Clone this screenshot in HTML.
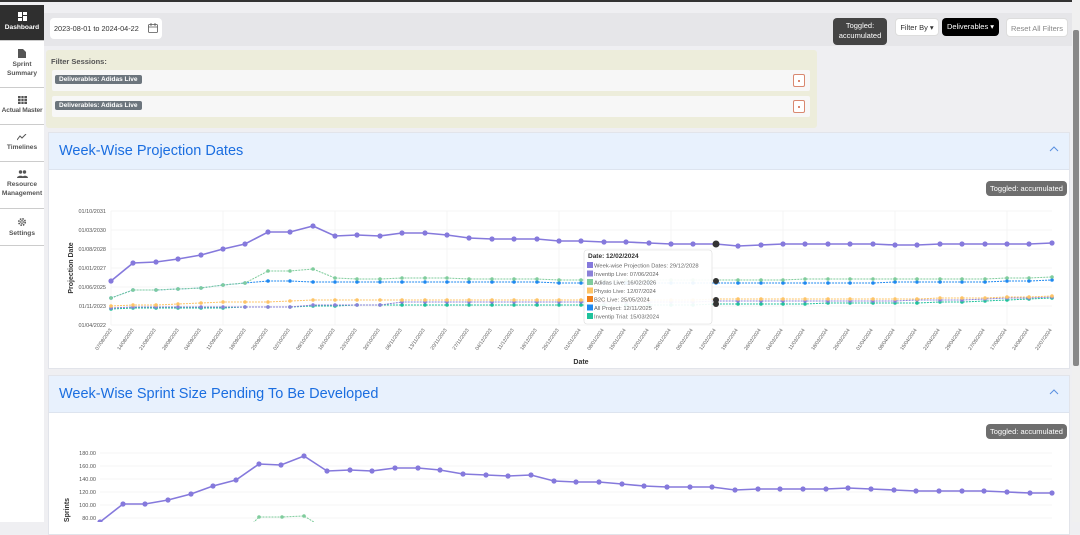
<!DOCTYPE html>
<html><head><meta charset="utf-8"><style>
*{box-sizing:border-box;margin:0;padding:0}
body{width:1080px;height:522px;overflow:hidden;background:#efeff2;font-family:"Liberation Sans",sans-serif;position:relative}
.topline{position:absolute;left:0;top:0;width:1080px;height:2px;background:#333}
.side{position:absolute;left:0;top:5px;width:44px;height:517px;background:#fff}
.si{position:absolute;left:0;width:44px;border-bottom:1px solid #ccc;text-align:center;font-size:6.6px;font-weight:bold;color:#555;line-height:9px;white-space:nowrap}
.si svg{display:block;margin:0 auto 2px}
.top{position:absolute;left:44px;top:13px;width:1028px;height:33px;background:#e6e6e9}
.date{position:absolute;left:50px;top:18px;width:112px;height:21px;background:#fff;border-radius:4px;font-size:7.3px;color:#333;padding:6px 4px;white-space:nowrap}
.btn{position:absolute;border-radius:4px;font-size:7.5px;text-align:center}
.filter{position:absolute;left:46px;top:50px;width:771px;height:78px;background:#ededdb;border-radius:3px}
.fs{position:absolute;left:51px;top:57px;font-size:7.5px;font-weight:bold;color:#555}
.row{position:absolute;left:52px;width:758px;height:21px;background:#f7f7f7;border-radius:2px}
.pill{position:absolute;left:3px;top:5px;background:#6c757d;color:#fff;font-size:6.5px;font-weight:bold;padding:1px 4px;border-radius:2px}
.x{position:absolute;right:5px;top:4px;width:12px;height:13px;border:1px solid #d98870;border-radius:2px;background:#fff}
.x:after{content:"";position:absolute;left:4px;top:5px;width:2px;height:2px;background:#d98870}
.card{position:absolute;left:48px;width:1022px;background:#fff;border:1px solid #e2e4ea}
.hd{height:37px;background:#e8f1fd;border-bottom:1px solid #dde4ef;padding:10px 10px;font-size:14.5px;color:#1b6ee0}
.chev{position:absolute;right:10px;top:13px}
.badge{position:absolute;background:#6e6e6e;color:#fff;font-size:7.5px;padding:3px 4px;border-radius:4px}
.scroll{position:absolute;left:1072px;top:0;width:8px;height:522px;background:#f0f0f0}
.thumb{position:absolute;left:1073px;top:30px;width:6px;height:336px;background:#888;border-radius:2px}
</style></head><body>
<div class="topline"></div>
<div class="side">
 <div class="si" style="top:0;height:36px;background:#2f2f2f;color:#fff;padding-top:7px"><svg width="9" height="9" viewBox="0 0 9 9"><rect x="0" y="0" width="4" height="5" fill="#fff"/><rect x="5" y="0" width="4" height="3" fill="#fff"/><rect x="0" y="6" width="4" height="3" fill="#fff"/><rect x="5" y="4" width="4" height="5" fill="#fff"/></svg>Dashboard</div>
 <div class="si" style="top:37px;height:46px;padding-top:7px"><svg width="8" height="9" viewBox="0 0 8 9"><path d="M0 0h5l3 3v6H0z" fill="#555"/></svg>Sprint<br>Summary</div>
 <div class="si" style="top:84px;height:36px;padding-top:7px"><svg width="9" height="8" viewBox="0 0 9 8"><rect width="9" height="8" fill="#555"/><path d="M3 0v8M6 0v8M0 2.7h9M0 5.3h9" stroke="#fff" stroke-width=".7"/></svg><span style="letter-spacing:-.2px">Actual Master</span></div>
 <div class="si" style="top:121px;height:36px;padding-top:8px"><svg width="10" height="7" viewBox="0 0 10 7"><path d="M0 6l3-4 2 2 4-4" stroke="#555" fill="none" stroke-width="1"/></svg>Timelines</div>
 <div class="si" style="top:158px;height:46px;padding-top:7px"><svg width="11" height="8" viewBox="0 0 11 8"><circle cx="3.5" cy="2" r="1.7" fill="#555"/><circle cx="7.5" cy="2" r="1.7" fill="#555"/><path d="M0 8c0-3 7-3 7 0zM5 8c0-3 6-3 6 0z" fill="#555"/></svg>Resource<br>Management</div>
 <div class="si" style="top:205px;height:36px;padding-top:7px"><svg width="10" height="10" viewBox="0 0 10 10"><circle cx="5" cy="5" r="3.2" stroke="#555" stroke-width="1.6" fill="none" stroke-dasharray="1.5 1"/><circle cx="5" cy="5" r="1.3" stroke="#555" fill="none" stroke-width=".8"/></svg>Settings</div>
</div>
<div class="top"></div>
<div class="date">2023-08-01 to 2024-04-22<svg style="position:absolute;right:4px;top:5px" width="10" height="10" viewBox="0 0 10 10"><rect x=".5" y="1.5" width="9" height="8" rx="1" fill="none" stroke="#555" stroke-width=".8"/><path d="M.5 4h9M3 0v3M7 0v3" stroke="#555" stroke-width=".8"/></svg></div>
<div class="btn" style="left:833px;top:18px;width:54px;height:27px;background:#444;color:#fff;padding-top:3px;line-height:10px">Toggled:<br>accumulated</div>
<div class="btn" style="left:895px;top:18px;width:44px;height:18px;background:#fff;border:1px solid #ddd;color:#333;padding-top:4px">Filter By ▾</div>
<div class="btn" style="left:942px;top:18px;width:57px;height:18px;background:#000;color:#fff;padding-top:4px">Deliverables ▾</div>
<div class="btn" style="left:1006px;top:18px;width:62px;height:19px;background:#fff;border:1px solid #ddd;color:#888;padding-top:5px">Reset All Filters</div>
<div class="filter"></div>
<div class="fs">Filter Sessions:</div>
<div class="row" style="top:70px"><span class="pill">Deliverables: Adidas Live</span><span class="x"></span></div>
<div class="row" style="top:96px"><span class="pill">Deliverables: Adidas Live</span><span class="x"></span></div>

<div class="card" style="top:132px;height:237px"><div class="hd">Week-Wise Projection Dates</div><svg class="chev" width="10" height="6" viewBox="0 0 10 6"><path d="M1 5l4-4 4 4" stroke="#5a8fe0" fill="none"/></svg><div class="badge" style="left:937px;top:48px">Toggled: accumulated</div></div>
<div class="card" style="top:375px;height:160px"><div class="hd">Week-Wise Sprint Size Pending To Be Developed</div><svg class="chev" width="10" height="6" viewBox="0 0 10 6"><path d="M1 5l4-4 4 4" stroke="#5a8fe0" fill="none"/></svg><div class="badge" style="left:937px;top:48px">Toggled: accumulated</div></div>

<svg style="position:absolute;left:0;top:0" width="1080" height="522" font-family="Liberation Sans" >
<defs>
<marker id="mp" markerWidth="6" markerHeight="6" refX="3" refY="3" markerUnits="userSpaceOnUse"><circle cx="3" cy="3" r="2.6" fill="#8579dc"/></marker>
<marker id="mg" markerWidth="4" markerHeight="4" refX="2" refY="2" markerUnits="userSpaceOnUse"><circle cx="2" cy="2" r="1.8" fill="#7fcc9c"/></marker>
<marker id="mb" markerWidth="4" markerHeight="4" refX="2" refY="2" markerUnits="userSpaceOnUse"><circle cx="2" cy="2" r="1.8" fill="#1e88f0"/></marker>
<marker id="my" markerWidth="4" markerHeight="4" refX="2" refY="2" markerUnits="userSpaceOnUse"><circle cx="2" cy="2" r="1.8" fill="#fdc467"/></marker>
<marker id="mo" markerWidth="4" markerHeight="4" refX="2" refY="2" markerUnits="userSpaceOnUse"><circle cx="2" cy="2" r="1.8" fill="#8a80d8"/></marker>
<marker id="mt" markerWidth="4" markerHeight="4" refX="2" refY="2" markerUnits="userSpaceOnUse"><circle cx="2" cy="2" r="1.8" fill="#1fc29b"/></marker>
</defs>
<g stroke="#eee" stroke-width=".6">
<path d="M111 211H1052M111 230H1052M111 249H1052M111 268H1052M111 287H1052M111 306H1052M111 325H1052"/>
<path d="M111 211V325M223 211V325M335 211V325M447 211V325M559 211V325M671 211V325M783 211V325M895 211V325M1007 211V325"/>
<path d="M100 453H1052M100 466H1052M100 479H1052M100 492H1052M100 505H1052M100 518H1052"/>
</g>
<g font-size="5.5" fill="#555" text-anchor="end">
<text x="106" y="213">01/10/2031</text><text x="106" y="232">01/03/2030</text><text x="106" y="251">01/08/2028</text><text x="106" y="270">01/01/2027</text><text x="106" y="289">01/06/2025</text><text x="106" y="308">01/11/2023</text><text x="106" y="327">01/04/2022</text>
<text x="96" y="455">180.00</text><text x="96" y="468">160.00</text><text x="96" y="481">140.00</text><text x="96" y="494">120.00</text><text x="96" y="507">100.00</text><text x="96" y="520">80.00</text>
</g>
<text transform="translate(73,268) rotate(-90)" font-size="7" font-weight="bold" fill="#333" text-anchor="middle">Projection Date</text>
<text transform="translate(69,510) rotate(-90)" font-size="7" font-weight="bold" fill="#333" text-anchor="middle">Sprints</text>
<text x="581" y="364" font-size="7" font-weight="bold" fill="#333" text-anchor="middle">Date</text>
<g font-size="5" fill="#555" text-anchor="end">
<text transform="translate(112,330) rotate(-55)">07/08/2023</text><text transform="translate(134,330) rotate(-55)">14/08/2023</text><text transform="translate(156,330) rotate(-55)">21/08/2023</text><text transform="translate(179,330) rotate(-55)">28/08/2023</text><text transform="translate(201,330) rotate(-55)">04/09/2023</text><text transform="translate(223,330) rotate(-55)">11/09/2023</text><text transform="translate(246,330) rotate(-55)">18/09/2023</text><text transform="translate(268,330) rotate(-55)">25/09/2023</text><text transform="translate(290,330) rotate(-55)">02/10/2023</text><text transform="translate(313,330) rotate(-55)">09/10/2023</text><text transform="translate(335,330) rotate(-55)">16/10/2023</text><text transform="translate(357,330) rotate(-55)">23/10/2023</text><text transform="translate(380,330) rotate(-55)">30/10/2023</text><text transform="translate(402,330) rotate(-55)">06/11/2023</text><text transform="translate(425,330) rotate(-55)">13/11/2023</text><text transform="translate(447,330) rotate(-55)">20/11/2023</text><text transform="translate(469,330) rotate(-55)">27/11/2023</text><text transform="translate(492,330) rotate(-55)">04/12/2023</text><text transform="translate(514,330) rotate(-55)">11/12/2023</text><text transform="translate(537,330) rotate(-55)">18/12/2023</text><text transform="translate(559,330) rotate(-55)">25/12/2023</text><text transform="translate(581,330) rotate(-55)">01/01/2024</text><text transform="translate(604,330) rotate(-55)">08/01/2024</text><text transform="translate(626,330) rotate(-55)">15/01/2024</text><text transform="translate(649,330) rotate(-55)">22/01/2024</text><text transform="translate(671,330) rotate(-55)">29/01/2024</text><text transform="translate(693,330) rotate(-55)">05/02/2024</text><text transform="translate(716,330) rotate(-55)">12/02/2024</text><text transform="translate(738,330) rotate(-55)">19/02/2024</text><text transform="translate(761,330) rotate(-55)">26/02/2024</text><text transform="translate(783,330) rotate(-55)">04/03/2024</text><text transform="translate(805,330) rotate(-55)">11/03/2024</text><text transform="translate(828,330) rotate(-55)">18/03/2024</text><text transform="translate(850,330) rotate(-55)">25/03/2024</text><text transform="translate(873,330) rotate(-55)">01/04/2024</text><text transform="translate(895,330) rotate(-55)">08/04/2024</text><text transform="translate(917,330) rotate(-55)">15/04/2024</text><text transform="translate(940,330) rotate(-55)">22/04/2024</text><text transform="translate(962,330) rotate(-55)">29/04/2024</text><text transform="translate(985,330) rotate(-55)">27/05/2024</text><text transform="translate(1007,330) rotate(-55)">17/06/2024</text><text transform="translate(1029,330) rotate(-55)">24/06/2024</text><text transform="translate(1052,330) rotate(-55)">22/07/2024</text>
</g>
<g fill="none">
<polyline stroke="#1e88f0" stroke-width="1" stroke-dasharray="2 1" marker-start="url(#mb)" marker-mid="url(#mb)" marker-end="url(#mb)" points="111,298 133,290 156,290 178,289 201,288 223,285 245,283 268,281 290,281 313,282 335,282 357,282 380,282 402,282 425,282 447,282 469,282 492,282 514,282 537,282 559,283 581,283 604,283 626,283 649,283 671,283 693,283 716,283 738,283 761,283 783,283 805,283 828,283 850,283 873,283 895,282 917,282 940,282 962,282 985,282 1007,281 1029,281 1052,280"/>
<polyline stroke="#7fcc9c" stroke-width="1" stroke-dasharray="2 1" marker-start="url(#mg)" marker-mid="url(#mg)" marker-end="url(#mg)" points="111,298 133,290 156,290 178,289 201,288 223,285 245,283 268,271 290,271 313,269 335,278 357,279 380,279 402,278 425,278 447,278 469,279 492,279 514,279 537,279 559,280 581,280 604,280 626,280 649,280 671,280 693,280 716,280 738,280 761,280 783,280 805,279 828,279 850,279 873,279 895,279 917,279 940,279 962,279 985,279 1007,278 1029,278 1052,277"/>
<polyline stroke="#1fc29b" stroke-width="1" stroke-dasharray="2 1" marker-start="url(#mt)" marker-mid="url(#mt)" marker-end="url(#mt)" points="111,309 133,308 156,308 178,308 201,308 223,308 245,307 268,307 290,307 313,306 335,306 357,305 380,305 402,305 425,305 447,305 469,305 492,305 514,305 537,305 559,305 581,305 604,305 626,305 649,305 671,305 693,305 716,304 738,304 761,304 783,304 805,304 828,303 850,303 873,303 895,303 917,303 940,302 962,302 985,301 1007,300 1029,299 1052,298"/>
<polyline stroke="#8a80d8" stroke-width="1" stroke-dasharray="2 1" marker-start="url(#mo)" marker-mid="url(#mo)" marker-end="url(#mo)" points="111,308 133,307 156,307 178,307 201,307 223,307 245,307 268,307 290,307 313,305 335,305 357,305 380,305 402,302 425,302 447,302 469,302 492,302 514,302 537,302 559,302 581,302 604,302 626,302 649,302 671,302 693,302 716,301 738,301 761,301 783,301 805,301 828,301 850,301 873,301 895,301 917,300 940,300 962,300 985,299 1007,298 1029,298 1052,297"/>
<polyline stroke="#fdc467" stroke-width="1" stroke-dasharray="2 1" marker-start="url(#my)" marker-mid="url(#my)" marker-end="url(#my)" points="111,306 133,305 156,305 178,304 201,303 223,302 245,302 268,302 290,301 313,300 335,300 357,300 380,300 402,300 425,300 447,300 469,300 492,300 514,300 537,300 559,300 581,300 604,300 626,300 649,300 671,300 693,300 716,299 738,299 761,299 783,299 805,299 828,299 850,299 873,299 895,299 917,299 940,298 962,298 985,298 1007,297 1029,297 1052,296"/>
<polyline stroke="#8579dc" stroke-width="1.6" marker-start="url(#mp)" marker-mid="url(#mp)" marker-end="url(#mp)" points="111,281 133,263 156,262 178,259 201,255 223,249 245,244 268,232 290,232 313,226 335,236 357,235 380,236 402,233 425,233 447,235 469,238 492,239 514,239 537,239 559,241 581,241 604,242 626,242 649,243 671,244 693,244 716,244 738,246 761,245 783,244 805,244 828,244 850,244 873,244 895,245 917,245 940,244 962,244 985,244 1007,244 1029,244 1052,243"/>
<circle cx="716" cy="244" r="3.5" fill="#333"/><circle cx="716" cy="281" r="3" fill="#333"/><circle cx="716" cy="300" r="3" fill="#333"/><circle cx="716" cy="304" r="3" fill="#333"/>
<polyline stroke="#7fcc9c" stroke-width="1" stroke-dasharray="2 1" marker-mid="url(#mg)" points="236,540 259,517 282,517 304,516 327,530 350,540"/>
<polyline stroke="#8579dc" stroke-width="1.6" marker-mid="url(#mp)" marker-end="url(#mp)" points="90,540 100,522 123,504 145,504 168,500 191,494 213,486 236,480 259,464 281,465 304,456 327,471 350,470 372,471 395,468 418,468 440,470 463,474 486,475 508,476 531,475 554,481 576,482 599,482 622,484 644,486 667,487 690,487 712,487 735,490 758,489 780,489 803,489 826,489 848,488 871,489 894,490 916,491 939,491 962,491 984,491 1007,492 1030,493 1052,493"/>
</g>
<g>
<rect x="584" y="250" width="128" height="74" rx="3" fill="#fff" fill-opacity=".93" stroke="#ddd" stroke-width=".6"/>
<text x="588" y="258" font-size="6.5" font-weight="bold" fill="#333">Date: 12/02/2024</text>
<g font-size="5.8" fill="#666">
<rect x="587" y="262" width="6" height="6" fill="#8579dc"/><text x="594" y="267.5">Week-wise Projection Dates: 29/12/2028</text>
<rect x="587" y="270.5" width="6" height="6" fill="#8a80d8"/><text x="594" y="276">Inventip Live: 07/06/2024</text>
<rect x="587" y="279" width="6" height="6" fill="#7fcc9c"/><text x="594" y="284.5">Adidas Live: 16/02/2026</text>
<rect x="587" y="287.5" width="6" height="6" fill="#fdc467"/><text x="594" y="293">Physio Live: 12/07/2024</text>
<rect x="587" y="296" width="6" height="6" fill="#f07f1a"/><text x="594" y="301.5">B2C Live: 25/05/2024</text>
<rect x="587" y="304.5" width="6" height="6" fill="#1e88f0"/><text x="594" y="310">All Project: 12/11/2025</text>
<rect x="587" y="313" width="6" height="6" fill="#1fc29b"/><text x="594" y="318.5">Inventip Trial: 15/03/2024</text>
</g></g>
</svg>
<div class="scroll"></div><div class="thumb"></div>
</body></html>
